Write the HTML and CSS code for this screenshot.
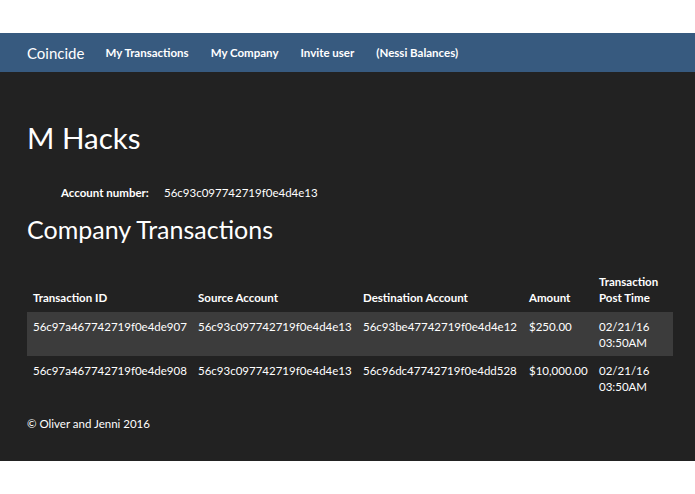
FILE: index.html
```html
<!DOCTYPE html>
<html>
<head>
<meta charset="utf-8">
<link rel="stylesheet" href="styles.css">
</head>
<body>
<div class="topgap"></div>
<nav class="navbar">
  <span class="brand">Coincide</span>
  <a class="nav-link">My Transactions</a>
  <a class="nav-link">My Company</a>
  <a class="nav-link">Invite user</a>
  <a class="nav-link">(Nessi Balances)</a>
</nav>
<main class="page">
  <h1 class="title">M Hacks</h1>
  <div class="account">
    <span class="account-label">Account number:</span>
    <span class="account-value">56c93c097742719f0e4d4e13</span>
  </div>
  <h2 class="subtitle">Company Transactions</h2>
  <table class="tx">
    <thead>
      <tr>
        <th class="c-id">Transaction ID</th>
        <th class="c-src">Source Account</th>
        <th class="c-dst">Destination Account</th>
        <th class="c-amt">Amount</th>
        <th class="c-time">Transaction Post Time</th>
      </tr>
    </thead>
    <tbody>
      <tr class="odd">
        <td>56c97a467742719f0e4de907</td>
        <td>56c93c097742719f0e4d4e13</td>
        <td>56c93be47742719f0e4d4e12</td>
        <td>$250.00</td>
        <td>02/21/16 03:50AM</td>
      </tr>
      <tr>
        <td>56c97a467742719f0e4de908</td>
        <td>56c93c097742719f0e4d4e13</td>
        <td>56c96dc47742719f0e4dd528</td>
        <td>$10,000.00</td>
        <td>02/21/16 03:50AM</td>
      </tr>
    </tbody>
  </table>
  <footer class="footer">© Oliver and Jenni 2016</footer>
</main>
</body>
</html>
```
FILE: styles.css
```css
html, body {
  margin: 0;
  padding: 0;
  background: #ffffff;
  font-family: Lato, "Open Sans", "Liberation Sans", sans-serif;
  color: #ffffff;
}
.topgap {
  height: 33px;
}
.navbar {
  height: 39px;
  background: #375a7f;
  display: flex;
  align-items: center;
  padding: 0 27px;
  box-sizing: border-box;
}
.brand {
  font-size: 15px;
  margin-right: 21px;
}
.nav-link {
  font-size: 11.5px;
  font-weight: 700;
  margin-right: 22px;
  color: #ffffff;
}
.page {
  background: #222222;
  height: 389px;
  padding: 1px 27px 0 27px;
  box-sizing: border-box;
}
.title {
  font-size: 29.5px;
  font-weight: 400;
  line-height: 32px;
  margin: 49px 0 0 0;
}
.account {
  display: flex;
  font-size: 11.5px;
  line-height: 16px;
  margin: 31px 0 0 34px;
}
.account-label {
  font-weight: 700;
  width: 103px;
}
.subtitle {
  font-size: 25px;
  font-weight: 400;
  line-height: 28px;
  margin: 14px 0 0 0;
}
.tx {
  border-collapse: collapse;
  table-layout: fixed;
  width: 646px;
  margin-top: 25px;
  font-size: 11.5px;
  line-height: 15.7px;
}
.tx th, .tx td {
  padding: 6px 6px;
  text-align: left;
  vertical-align: top;
  white-space: normal;
}
.tx th {
  vertical-align: bottom;
  font-weight: 700;
  padding-bottom: 7px;
}
.tx td {
  padding-top: 7px;
  padding-bottom: 5px;
}
.c-id, .c-src { width: 153px; }
.c-dst { width: 154px; }
.c-amt { width: 58px; }
.c-time { width: 68px; }
.odd {
  background: #3c3c3c;
}
.footer {
  font-size: 11.5px;
  line-height: 16px;
  margin-top: 17px;
}
```
